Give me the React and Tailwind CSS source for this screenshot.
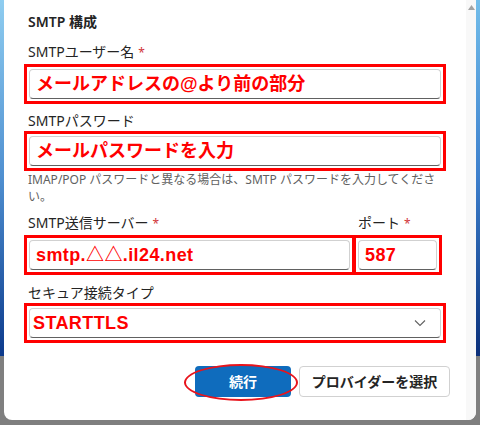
const uiFont = { fontFamily: "'Noto Sans', 'Noto Sans CJK JP', sans-serif" };

const Label = ({ children, required }) => (
	<div className="text-[14px] leading-[20px] text-[#242424]">
		{children}
		{required && <span className="text-[#d13438] text-[12px] ml-[4px]">*</span>}
	</div>
);

const Marked = ({ className, inner = "px-[6px]", children }) => (
	<div className={`h-[40px] border-[3px] border-[#ff0000] p-[2px] ${className}`}>
		<div className={`h-full rounded-[4px] border border-[#d1d1d1] border-b-[#616161] bg-white flex items-center ${inner}`}>
			{children}
		</div>
	</div>
);

const RedText = ({ children, latin }) => (
	<span
		className={`text-[#ff0000] font-bold text-[18px] leading-none ${latin ? "tracking-[0.4px]" : ""}`}
		style={{ fontFamily: "'Liberation Sans', 'Noto Sans CJK JP', sans-serif" }}
	>
		{children}
	</span>
);

const App = () => {
	return (
		<div className="w-[480px] h-[425px] bg-[#7f7f7f] flex overflow-hidden" style={uiFont}>
			<div className="w-[4px] shrink-0">
				<div className="h-[356px] bg-gradient-to-b from-[#8fcdf0] via-[#4f8fd0] to-[#0d3a8c]" />
			</div>

			<div className="w-[472px] h-[420px] bg-white rounded-b-[8px] flex shrink-0 overflow-hidden">
				<div className="flex-1 pl-[20px] pt-[12px]">
					<div className="text-[14px] leading-[20px] font-semibold text-[#242424] pl-[4px]">SMTP 構成</div>

					<div className="mt-[10px] pl-[4px]">
						<Label required>SMTPユーザー名</Label>
					</div>
					<Marked className="w-[422px] mt-[1px]">
						<RedText>メールアドレスの@より前の部分</RedText>
					</Marked>

					<div className="mt-[7px] pl-[4px]">
						<Label>SMTPパスワード</Label>
					</div>
					<Marked className="w-[422px]">
						<RedText>メールパスワードを入力</RedText>
					</Marked>
					<div className="pl-[4px] text-[12px] leading-[17px] text-[#616161]">
						<div className="whitespace-nowrap">
							IMAP/POP パスワードと異なる場合は、SMTP パスワードを入力してくださ
						</div>
						<div>い。</div>
					</div>

					<div className="flex mt-[8px]">
						<div className="w-[331px] pl-[4px]">
							<Label required>SMTP送信サーバー</Label>
						</div>
						<div className="pl-[3px]">
							<Label required>ポート</Label>
						</div>
					</div>
					<div className="flex mt-[1px]">
						<Marked className="w-[331px]">
							<RedText latin>smtp.△△.il24.net</RedText>
						</Marked>
						<Marked className="w-[87px] border-l-[1px]">
							<RedText latin>587</RedText>
						</Marked>
					</div>

					<div className="mt-[8px] pl-[4px]">
						<Label>セキュア接続タイプ</Label>
					</div>
					<Marked className="w-[422px]" inner="pl-[3px] pr-[14px]">
						<div className="flex-1 flex items-center justify-between">
							<RedText latin>STARTTLS</RedText>
							<svg width="12" height="8" viewBox="0 0 12 8" fill="none">
								<path d="M1 1.5 L6 6.5 L11 1.5" stroke="#616161" strokeWidth="1.1" />
							</svg>
						</div>
					</Marked>

					<div className="flex justify-end gap-[8px] mt-[23px] pr-[16px]">
						<div className="relative">
							<button className="w-[96px] h-[31px] rounded-[4px] bg-[#0f6cbd] text-white text-[14px] font-bold">
								続行
							</button>
							<div className="absolute left-[-11px] top-[-2px] w-[114px] h-[37px] rounded-[50%] border-2 border-[#e8141c]" />
						</div>
						<button className="w-[151px] h-[31px] rounded-[4px] border border-[#d1d1d1] bg-white text-[#242424] text-[14px] font-bold">
							プロバイダーを選択
						</button>
					</div>
				</div>

				<div className="w-[10px] bg-[#f8f8f8] flex justify-center pt-[5px]">
					<svg width="7" height="5" viewBox="0 0 7 5">
						<path d="M3.5 0 L7 5 L0 5 Z" fill="#a3a3a3" />
					</svg>
				</div>
			</div>

			<div className="w-[4px] shrink-0">
				<div className="h-[356px] bg-gradient-to-b from-[#72bdea] via-[#3d7fcc] to-[#0b2f7a]" />
			</div>
		</div>
	);
};

export default App;
